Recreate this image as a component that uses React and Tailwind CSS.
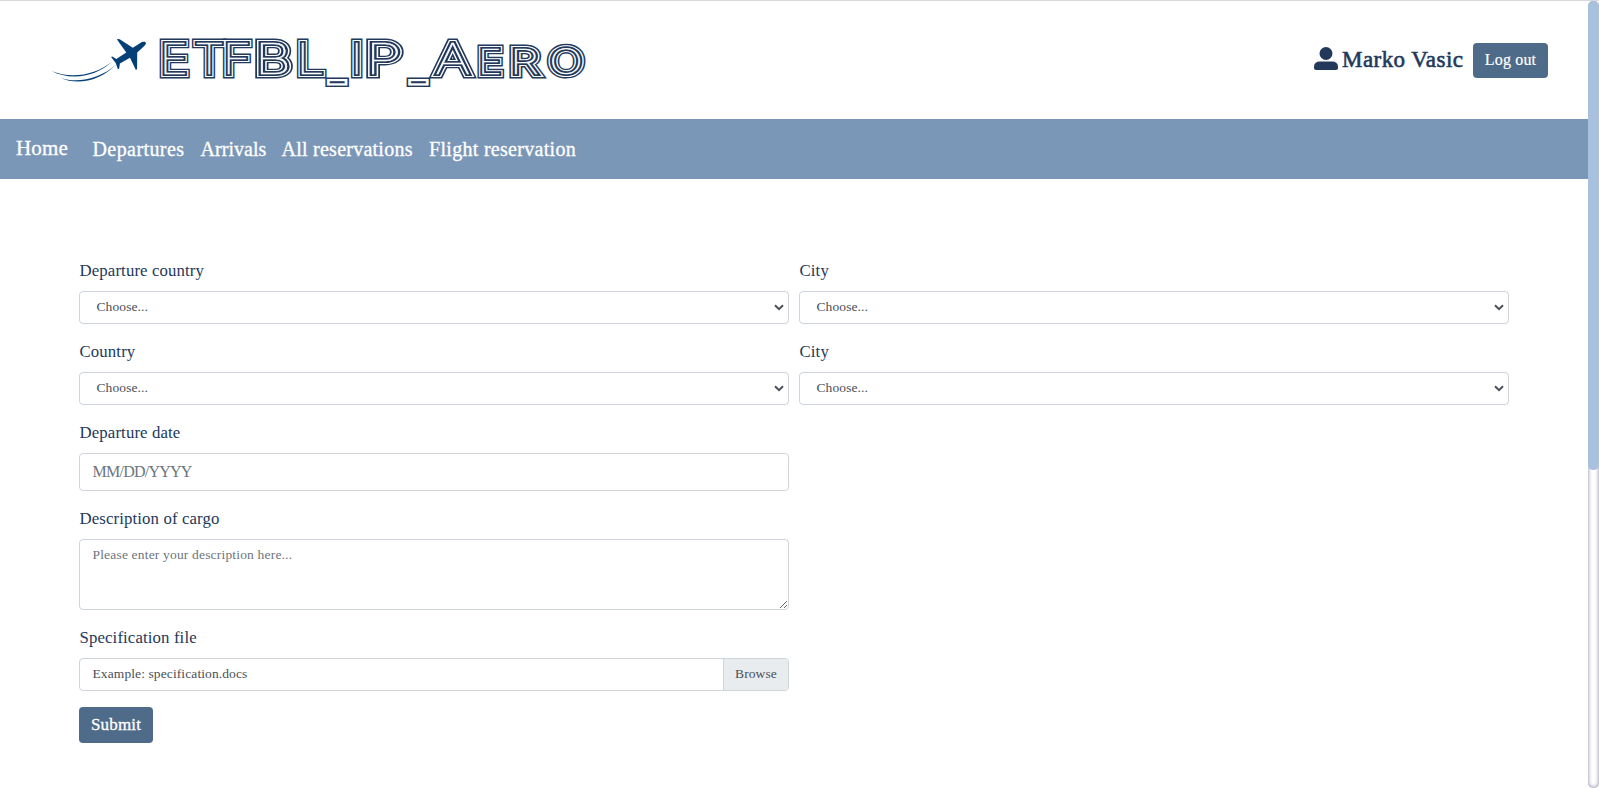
import React from "react";

const NAVY = "#23395b";

function Plane() {
  return (
    <svg className="block h-[50px] w-[100px] shrink-0" viewBox="0 0 100 50">
      <g fill="#034078">
        <path d="M95.500 7.300C94.300 6.400 92 6.900 90 8.200L82.800 12.800L69.700 4.300L67 4.100L67.500 5.200L76.300 17.600L66.300 24L62.300 21.600L61.100 21.900L65.700 28L67.900 34.200L69.200 33.400L69.900 28.500L80 22.800L86 35.300L87.100 33.700L87.200 17.500L94 11.200C95.800 9.700 96.500 8.200 95.500 7.300Z" />
        <path d="M1.500 36C20 43.800 45 41 62 26.500C46 42.400 20 45.800 1.500 36Z" />
        <path d="M10.500 43C28 48.600 50 44 66 29.500C50 46.200 28 50.400 10.500 43Z" />
      </g>
    </svg>
  );
}

const layers = [
  { color: NAVY, w: "8.8px", u: "8.8px" },
  { color: "#fff", w: "6.200px", u: "6px" },
  { color: NAVY, w: "4px", u: "1.400px" },
  { color: "#fff", w: "0.500px", u: "0px" },
];

function Wordmark() {
  return (
    <svg className="block h-[60px] w-[440px]" viewBox="150 30 440 60">
      <defs>
        <text
          id="brand"
          y="73.900"
          strokeMiterlimit="2"
          className="font-[Inter,sans-serif] text-[42px] font-thin [stroke-width:var(--w)]"
        >
          <tspan x="135 164.500 188.600">ETF</tspan>
          <tspan x="215.800" textLength="31" lengthAdjust="spacingAndGlyphs">B</tspan>
          <tspan x="251.200">L</tspan>
          <tspan x="280.100" dy="8" fill={NAVY} className="text-[26px] [stroke-width:var(--u)]">_</tspan>
          <tspan x="297" dy="-8">I</tspan>
          <tspan x="309.900" textLength="30.500" lengthAdjust="spacingAndGlyphs">P</tspan>
          <tspan x="349" dy="8" fill={NAVY} className="text-[26px] [stroke-width:var(--u)]">_</tspan>
          <tspan x="368.700" dy="-8" textLength="30" lengthAdjust="spacingAndGlyphs">A</tspan>
          <tspan x="405.100" className="text-[34.5px] uppercase">e</tspan>
          <tspan x="432.200" textLength="24.500" lengthAdjust="spacingAndGlyphs" className="text-[34.5px] uppercase">r</tspan>
          <tspan x="465.500" textLength="28.500" lengthAdjust="spacingAndGlyphs" className="text-[34.5px] uppercase">o</tspan>
        </text>
      </defs>
      {layers.map((l) => (
        <use
          key={l.w}
          href="#brand"
          transform="scale(1.18 1)"
          stroke={l.color}
          fill={l.color}
          style={{ "--w": l.w, "--u": l.u }}
        />
      ))}
    </svg>
  );
}

function Label({ children }) {
  return <label className="mb-2 block h-6 pl-[0.5px] text-[16.8px] leading-6 tracking-[0.12px] text-[#23395b]">{children}</label>;
}

function Select({ label }) {
  return (
    <div className="w-[710px]">
      <Label>{label}</Label>
      <div className="flex h-[33px] items-center justify-between rounded-[4px] border border-[#ced4da] pr-1 pl-[16.5px] text-[13.5px] tracking-[0.1px] text-[#495057]">
        <span>Choose...</span>
        <svg className="h-[7px] w-[10px]" viewBox="0 0 10 7" fill="none" stroke="#495057" strokeWidth="2">
          <path d="M1 1.200L5 5.200L9 1.200" />
        </svg>
      </div>
    </div>
  );
}

export default function App() {
  return (
    <div className="flex h-[788px] w-full overflow-hidden border-t border-[#d9d9d9] bg-white font-['Liberation_Serif',serif]">
      <div className="min-w-0 grow">
        <header className="flex h-[118px] items-center justify-between pr-10 pl-[50px]">
          <div className="flex items-center">
            <Plane />
            <Wordmark />
          </div>
          <div className="flex items-center text-[#23395b]">
            <svg className="mr-[4px] mb-[3px] h-[23px] w-[24px]" viewBox="0 0 24 23" fill="#23395b">
              <circle cx="12" cy="6.500" r="6.500" />
              <path d="M6 14.500H18Q24 14.500 24 20V21Q24 23 22 23H2Q0 23 0 21V20Q0 14.500 6 14.500Z" />
            </svg>
            <span className="mr-[10px] w-[121px] text-[23px] leading-8 tracking-[0.45px] whitespace-nowrap [-webkit-text-stroke:0.6px_#23395b]">Marko Vasic</span>
            <button className="h-[35px] w-[75px] rounded-[4px] bg-[#4e6b89] text-[16px] tracking-[0.15px] text-white [-webkit-text-stroke:0.2px_white]">Log out</button>
          </div>
        </header>
        <nav className="flex h-[60px] items-center bg-[#7b97b8] pl-4 text-[20px] tracking-[0.3px] text-white [-webkit-text-stroke:0.3px_white]">
          <a className="w-[76.5px] pb-px text-[21px] tracking-[0.2px]">Home</a>
          <a className="w-[108px] tracking-[0.42px]">Departures</a>
          <a className="w-[81px] tracking-[0.05px]">Arrivals</a>
          <a className="w-[147.5px] tracking-[0.25px]">All reservations</a>
          <a>Flight reservation</a>
        </nav>
        <main className="flex flex-col gap-4 pt-[80px] pl-[79px]">
          <div className="flex gap-[10px]">
            <Select label="Departure country" />
            <Select label="City" />
          </div>
          <div className="flex gap-[10px]">
            <Select label="Country" />
            <Select label="City" />
          </div>
          <div className="w-[710px]">
            <Label>Departure date</Label>
            <input
              placeholder="MM/DD/YYYY"
              className="block h-[38px] w-full rounded-[4px] border border-[#ced4da] px-[12.5px] text-[16px] tracking-[-0.75px] placeholder:text-[#6c757d]"
            />
          </div>
          <div className="w-[710px]">
            <Label>Description of cargo</Label>
            <textarea
              placeholder="Please enter your description here..."
              className="block h-[71px] w-full resize rounded-[4px] border border-[#ced4da] px-[12.5px] py-[5px] text-[13.5px] leading-5 tracking-[0.18px] placeholder:text-[#6c757d]"
            />
          </div>
          <div className="w-[710px]">
            <Label>Specification file</Label>
            <div className="flex h-[33px] items-stretch overflow-hidden rounded-[4px] border border-[#ced4da] text-[13.5px] tracking-[0.1px] text-[#495057]">
              <span className="flex grow items-center pl-[12.5px]">Example: specification.docs</span>
              <span className="flex w-[65px] items-center justify-center border-l border-[#ced4da] bg-[#e9ecef]">Browse</span>
            </div>
          </div>
          <button className="h-9 w-[74px] rounded-[4px] bg-[#4e6b89] text-[17px] tracking-[0.15px] text-white [-webkit-text-stroke:0.3px_white]">Submit</button>
        </main>
      </div>
      <div className="w-[11px] shrink-0 rounded-[5px] bg-white shadow-[inset_0_0_4px_#8080a0]">
        <div className="h-[460px] rounded-[5px] bg-[#a8c1de] pb-[469px]" />
      </div>
    </div>
  );
}
